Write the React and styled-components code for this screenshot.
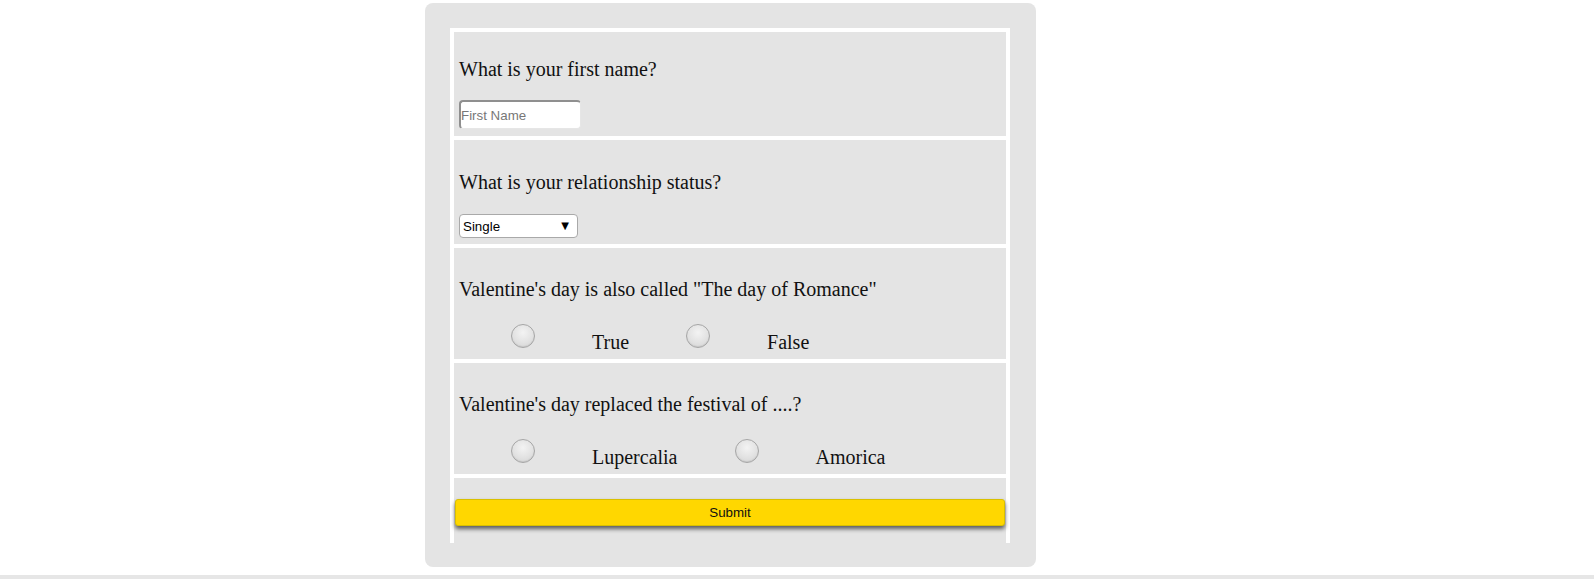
import React from "react";
import styled, { createGlobalStyle } from "styled-components";

const GlobalStyle = createGlobalStyle`
  body {
    margin: 0;
    background: #ffffff;
    font-family: "Liberation Serif", "Times New Roman", serif;
  }
`;

const Page = styled.div`
  display: flex;
  flex-direction: column;
  padding-top: 3px;
`;

const Card = styled.div`
  width: 611px;
  margin-left: 425px;
  box-sizing: border-box;
  padding: 25px 26px 24px 25px;
  background-color: #e4e4e4;
  border-radius: 8px;
`;

const Form = styled.form`
  display: flex;
  flex-direction: column;
  gap: 4px;
  padding: 4px 4px 0 4px;
  background-color: #ffffff;
`;

const Block = styled.div`
  box-sizing: border-box;
  height: ${(p) => p.$h}px;
  padding: ${(p) => p.$pt}px ${(p) => p.$px ?? 5}px 0;
  background-color: #e4e4e4;
  display: flex;
  flex-direction: column;
  align-items: flex-start;
`;

const Question = styled.p`
  margin: 0 0 ${(p) => p.$gap}px 0;
  font-size: 20px;
  line-height: 23px;
  color: #111111;
`;

const TextInput = styled.input`
  box-sizing: border-box;
  width: 122px;
  height: 29px;
  padding: 0;
  border-style: solid;
  border-width: 2px 1px 1px 2px;
  border-color: #8f8f8f #e6e6e6 #e6e6e6 #8f8f8f;
  border-radius: 4px;
  background: #ffffff;
  font-family: "Liberation Sans", Arial, sans-serif;
  font-size: 13.33px;
  outline: none;
  &::placeholder {
    color: #777777;
  }
`;

const SelectWrap = styled.div`
  position: relative;
  width: 119px;
  height: 24px;
  &::after {
    content: "▼";
    position: absolute;
    right: 9px;
    top: 5px;
    font-size: 10px;
    line-height: 14px;
    color: #000000;
    font-family: "DejaVu Sans", sans-serif;
    pointer-events: none;
  }
`;

const Select = styled.select`
  appearance: none;
  box-sizing: border-box;
  width: 100%;
  height: 100%;
  padding: 0 0 0 3px;
  border: 1px solid #a9a9a9;
  border-radius: 4px;
  background: #ffffff;
  color: #000000;
  font-family: "Liberation Sans", Arial, sans-serif;
  font-size: 13.33px;
  outline: none;
`;

const Options = styled.div`
  display: flex;
  align-items: flex-end;
  gap: 57px;
  padding-left: 52px;
`;

const Radio = styled.input.attrs({ type: "radio" })`
  appearance: none;
  box-sizing: border-box;
  width: 24px;
  height: 24px;
  margin: 0 0 6px 0;
  border: 1px solid #a6a6a6;
  border-radius: 50%;
  background: radial-gradient(circle at 50% 35%, #f3f3f3 0%, #e2e2e2 55%, #d2d2d2 100%);
  box-shadow: inset 0 -1px 1px rgba(0, 0, 0, 0.08);
`;

const OptionLabel = styled.label`
  font-size: 20px;
  line-height: 23px;
  color: #111111;
`;

const SubmitButton = styled.button`
  box-sizing: border-box;
  width: 550px;
  height: 27px;
  margin-left: 1px;
  border: 1px solid #d9c000;
  border-radius: 3px;
  background-color: #ffd700;
  color: #111111;
  font-family: "Liberation Sans", Arial, sans-serif;
  font-size: 13.33px;
  box-shadow: 0 3px 4px rgba(0, 0, 0, 0.6);
  cursor: pointer;
`;

const Footer = styled.div`
  height: 20px;
  margin-top: 8px;
  background-color: #e6e6e6;
`;

const choiceQuestions = [
  {
    text: 'Valentine\'s day is also called "The day of Romance"',
    name: "romance",
    options: ["True", "False"],
  },
  {
    text: "Valentine's day replaced the festival of ....?",
    name: "festival",
    options: ["Lupercalia", "Amorica"],
  },
];

export default function App() {
  return (
    <>
      <GlobalStyle />
      <Page>
        <Card>
          <Form onSubmit={(e) => e.preventDefault()}>
            <Block $h={104} $pt={26}>
              <Question $gap={19}>What is your first name?</Question>
              <TextInput type="text" placeholder="First Name" />
            </Block>
            <Block $h={104} $pt={31}>
              <Question $gap={20}>What is your relationship status?</Question>
              <SelectWrap>
                <Select defaultValue="single">
                  <option value="single">Single</option>
                  <option value="relationship">In a relationship</option>
                  <option value="married">Married</option>
                </Select>
              </SelectWrap>
            </Block>
            {choiceQuestions.map((q) => (
              <Block key={q.name} $h={111} $pt={30}>
                <Question $gap={23}>{q.text}</Question>
                <Options>
                  {q.options.map((opt) => (
                    <React.Fragment key={opt}>
                      <Radio name={q.name} id={q.name + opt} />
                      <OptionLabel htmlFor={q.name + opt}>{opt}</OptionLabel>
                    </React.Fragment>
                  ))}
                </Options>
              </Block>
            ))}
            <Block $h={65} $pt={21} $px={0}>
              <SubmitButton type="submit">Submit</SubmitButton>
            </Block>
          </Form>
        </Card>
        <Footer />
      </Page>
    </>
  );
}
